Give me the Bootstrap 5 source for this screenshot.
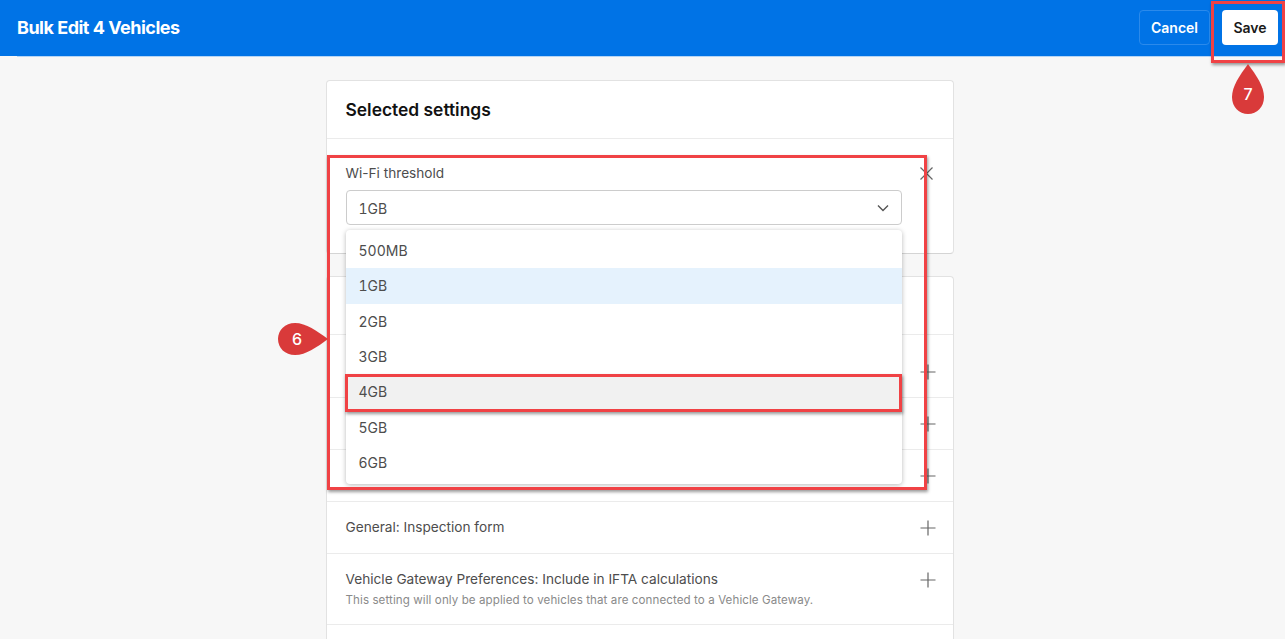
<!DOCTYPE html>
<html lang="en"><head><meta charset="utf-8"><title>Bulk Edit 4 Vehicles</title>
<link rel="stylesheet" href="https://cdn.jsdelivr.net/npm/bootstrap@5.3.0/dist/css/bootstrap.min.css">
<style>
html,body{height:639px;overflow:hidden}
body{background:#f7f7f7;font-family:Inter,"Liberation Sans",sans-serif;color:#4d4d4d;position:relative}
.topbar{height:56px;background:#0073e6;padding:10px 7px 11px 17px}
.topbar-line{height:1px;margin-left:17px;background:#b5d5f6}
.topbar h1{font-size:18px;font-weight:700;letter-spacing:-.5px;color:#fff;margin:0}
.act{font-size:14px;font-weight:600;height:35px;padding:0;border-radius:4px}
.act-cancel{width:71px;color:#fff;border:1px solid #2b8aeb;background:transparent}
.act-save{width:56px;color:#1a1a1a;background:#fff;border:0;margin-left:12px}
.sheet{width:628px;margin:23px auto 0;position:relative;left:-3px}
.panel{background:#fff;border:1px solid #e2e2e2;border-bottom-color:#d4d4d4;border-radius:4px;margin-bottom:22px}
.panel-head{height:58px;padding:1px 19px 0;border-bottom:1px solid #ebebeb;font-size:17.4px;font-weight:600;color:#111;display:flex;align-items:center}
.blank-head{height:58px;border-bottom:1px solid #ebebeb}
.setting{padding:0 19px;font-size:13.65px;display:flex;justify-content:space-between;border-bottom:1px solid #ebebeb;position:relative}
.setting:last-child{border-bottom:0}
.setting>svg{flex:none;margin-right:-2px}
.setting small{display:block;font-size:11.55px;color:#8a8a8a;margin-top:3px;letter-spacing:.1px}
.r1{height:63px;align-items:center;padding-top:12px}.r2{height:52px;align-items:center}
.r3{height:71px;padding-top:15px}
.r3>svg{margin-top:3px}
.wifi{height:114px;padding-top:26px;display:block;border:0}
.wifi>svg{position:absolute;right:19px;top:27px;margin-right:0}
.wifi-label{line-height:17px;margin-bottom:8px}
.fakeselect{width:556px;height:35px;border:1px solid #ccc;border-radius:4px;padding:1px 12px 0;display:flex;align-items:center;justify-content:space-between;font-size:14px;font-variant-numeric:tabular-nums}
.menu{position:absolute;left:19px;top:91px;width:556px;margin:0;padding:3px 0 4px;min-width:0;border:0;border-radius:4px;background:#fff;box-shadow:0 1px 5px rgba(0,0,0,.28);z-index:3;font-variant-numeric:tabular-nums}
.menu li{height:35.3px;padding:0 13px;display:flex;align-items:center;font-size:14px;color:#4d4d4d}
.menu li.sel{background:#e5f2fd}.menu li.hov{background:#f1f1f1}
.callout{position:absolute;border:3px solid #f04245;box-shadow:1px 2px 3px rgba(0,0,0,.4);z-index:5;pointer-events:none}
.c1{left:327px;top:155px;width:600px;height:335px}
.c2{left:345px;top:374px;width:557px;height:38px}
.c3{left:1211px;top:1px;width:74px;height:62px}
.pin{position:absolute;z-index:6}
.pin6{left:277px;top:322px}.pin7{left:1231px;top:63px}
.pin text{font:500 16px Inter,"Liberation Sans",sans-serif;fill:#fff;text-anchor:middle}
</style></head><body>
<header class="topbar d-flex justify-content-between align-items-center">
<h1>Bulk Edit 4 Vehicles</h1>
<div class="d-flex"><button class="btn act act-cancel">Cancel</button><button class="btn act act-save">Save</button></div>
</header>
<div class="topbar-line"></div>
<main class="sheet">
<section class="panel">
<div class="panel-head">Selected settings</div>
<div class="setting wifi">
<div class="wifi-label">Wi-Fi threshold</div>
<svg width="15" height="15" viewBox="0 0 15 15" fill="none" stroke="#666" stroke-width="1.2"><path d="M1.5 1.5l12 12M13.5 1.5l-12 12"/></svg>
<div class="fakeselect"><span>1GB</span><svg width="12" height="8" viewBox="0 0 12 8" fill="none" stroke="#555" stroke-width="1.4"><path d="M1 1.5l5 5 5-5"/></svg></div>
<ul class="dropdown-menu show menu list-unstyled">
<li>500MB</li><li class="sel">1GB</li><li>2GB</li><li>3GB</li><li class="hov">4GB</li><li>5GB</li><li>6GB</li>
</ul>
</div>
</section>
<section class="panel">
<div class="blank-head"></div>
<div class="setting r1"><span></span><svg width="16" height="16" viewBox="0 0 16 16" fill="none" stroke="#666" stroke-width="1.2"><path d="M8 .5v15M.5 8h15"/></svg></div>
<div class="setting r2"><span></span><svg width="16" height="16" viewBox="0 0 16 16" fill="none" stroke="#666" stroke-width="1.2"><path d="M8 .5v15M.5 8h15"/></svg></div>
<div class="setting r2"><span></span><svg width="16" height="16" viewBox="0 0 16 16" fill="none" stroke="#666" stroke-width="1.2"><path d="M8 .5v15M.5 8h15"/></svg></div>
<div class="setting r2"><span>General: Inspection form</span><svg width="16" height="16" viewBox="0 0 16 16" fill="none" stroke="#666" stroke-width="1.2"><path d="M8 .5v15M.5 8h15"/></svg></div>
<div class="setting r3"><div>Vehicle Gateway Preferences: Include in IFTA calculations<small>This setting will only be applied to vehicles that are connected to a Vehicle Gateway.</small></div><svg width="16" height="16" viewBox="0 0 16 16" fill="none" stroke="#666" stroke-width="1.2"><path d="M8 .5v15M.5 8h15"/></svg></div>
<div class="setting r2"></div>
</section>
</main>
<div class="callout c1"></div><div class="callout c2"></div><div class="callout c3"></div>
<svg class="pin pin6" width="52" height="34" viewBox="0 0 52 34"><path d="M18 1C8 1 1 8 1 17s7 16 17 16c11 0 22-8 33-16C40 9 29 1 18 1z" fill="#d93a3a"/><text x="20" y="23">6</text></svg>
<svg class="pin pin7" width="34" height="52" viewBox="0 0 34 52"><path d="M17 1C9 12 1 23 1 34c0 10 7 17 16 17s16-7 16-17C33 23 25 12 17 1z" fill="#d93a3a"/><text x="17" y="37">7</text></svg>
<script src="https://cdn.jsdelivr.net/npm/bootstrap@5.3.0/dist/js/bootstrap.bundle.min.js"></script>
</body></html>
